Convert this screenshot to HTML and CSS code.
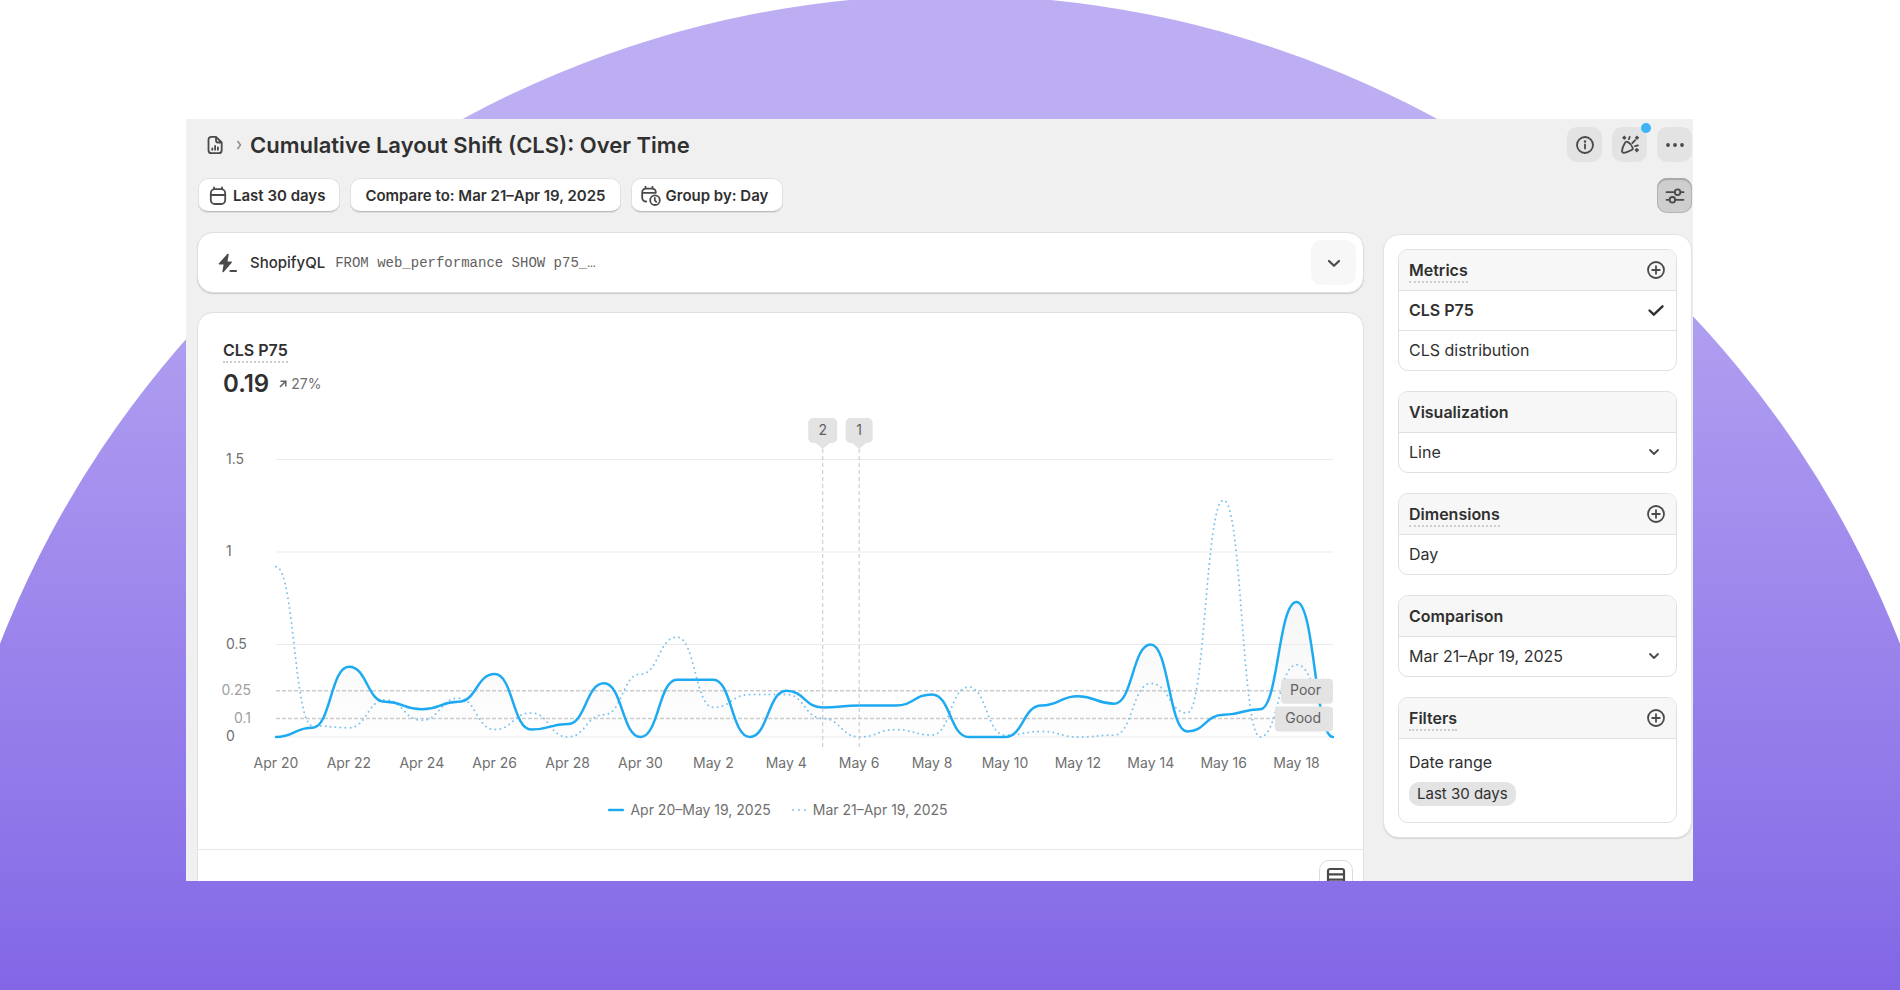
FILE: index.html
```html
<!DOCTYPE html>
<html lang="en">

<head>
  <meta charset="utf-8">
  <title>Cumulative Layout Shift (CLS): Over Time</title>
  <link rel="stylesheet" href="styles.css">
</head>

<body>
  <div class="hero">
    <div class="window">

      <header class="header">
        <svg class="icon" viewBox="0 0 20 20">
          <path d="M11 1.800H6.500A3 3 0 0 0 3.500 4.800v10.400a3 3 0 0 0 3 3h7.200a3 3 0 0 0 3-3V7.500zM11 1.800v3.700a2 2 0 0 0 2 2h3.700M7.300 14.800v-1.500M10.100 14.800v-3.800M12.900 14.800v-2.500" />
        </svg>
        <svg class="crumb" viewBox="0 0 8 12"><path d="M2.500 2l3 4-3 4" /></svg>
        <h1>Cumulative Layout Shift (CLS): Over Time</h1>
        <div class="header-actions">
          <button class="icon-button" aria-label="About this report">
            <svg class="icon" viewBox="0 0 20 20">
              <circle cx="10" cy="10" r="8" />
              <path d="M10 9.500v4" />
              <circle class="dot" cx="10" cy="6.500" r="1.200" />
            </svg>
          </button>
          <button class="icon-button" aria-label="What's new">
            <svg class="icon" viewBox="0 0 20 20">
              <path d="M7.600 6.900c1.800.9 4.200 3.500 5 5.600.5 1.300 0 2-1 2.500-2.200 1.200-4.800 2.500-7.600 2.800-1.300.1-2.200-.9-2-2.200.3-2.700 1.600-5.400 2.900-7.600.6-1 1.500-1.700 2.700-1.100zM8.900 4.200l.8-2.400M12.300 8.200l2.900-3M15 11.200l3-.9" />
              <path class="dot" d="M4.300 .6l2.200 2.200-2.200 2.200-2.200-2.200zM17 .6l2.200 2.200L17 5l-2.200-2.200zM16.800 12.800l2.300 2.300-2.300 2.300-2.300-2.300z" />
            </svg>
            <span class="notice"></span>
          </button>
          <button class="icon-button" aria-label="More actions">
            <svg class="icon" viewBox="0 0 20 20">
              <circle class="dot" cx="3" cy="10" r="1.900" />
              <circle class="dot" cx="10" cy="10" r="1.900" />
              <circle class="dot" cx="17" cy="10" r="1.900" />
            </svg>
          </button>
        </div>
      </header>

      <div class="toolbar">
        <button class="chip">
          <svg class="icon" viewBox="0 0 20 20">
            <rect x="2.800" y="3.200" width="14.400" height="14.800" rx="4" />
            <path d="M6 1.500v1.700M14 1.500v1.700M3 9h14" />
          </svg>
          Last 30 days
        </button>
        <button class="chip chip-plain">Compare to: Mar 21–Apr 19, 2025</button>
        <button class="chip">
          <svg class="icon" viewBox="0 0 20 20">
            <path d="M4.500 .8v1.800M11.500 .8v1.800M5.200 15.500c-2.200 0-4-1.500-4-3.700V6.200a3.600 3.600 0 0 1 3.600-3.600h6.400a3.600 3.600 0 0 1 3.600 3.600v.6H1.200" />
            <circle cx="14" cy="14.200" r="4.800" />
            <path d="M13.800 11.800v2.600l1.500 1.400" />
          </svg>
          Group by: Day
        </button>
        <button class="icon-button pressed" aria-label="Report settings">
          <svg class="icon" viewBox="0 0 20 20">
            <path d="M1.500 6.200h8.300M15.400 6.200h3.100M1.500 13.800h3.100M10.200 13.800h8.300" />
            <circle cx="12.600" cy="6.200" r="2.800" />
            <circle cx="7.400" cy="13.800" r="2.800" />
          </svg>
        </button>
      </div>

      <div class="content">
        <main class="main">
          <section class="card query">
            <svg class="icon" viewBox="0 0 20 20">
              <path class="dot" d="M9.300 1L1 10.300c-.5.600-.2 1.300.6 1.300h4l-1.200 6.600c-.2 1 .7 1.400 1.300.7l8-9.200c.5-.6.2-1.300-.6-1.300H9.500l1.200-6.700c.1-1-.8-1.400-1.400-.7z" />
              <path class="thick" d="M12.500 18h5.500" />
            </svg>
            <span class="query-name">ShopifyQL</span>
            <code>FROM web_performance SHOW p75_…</code>
            <button class="expand" aria-label="Expand query">
              <svg class="icon" viewBox="0 0 20 20"><path class="thick" d="M5 8l5 4.800 5-4.800" /></svg>
            </button>
          </section>

          <section class="card report">
            <div class="report-body">
              <h2><span class="hint">CLS P75</span></h2>
              <div class="total">
                <strong>0.19</strong>
                <svg class="trend" viewBox="0 0 8 8"><path d="M1 7l5.500-5.500M1.500 1.200h5.300V6.500" /></svg>
                <span>27%</span>
              </div>
              <svg id="chart" role="img" aria-label="CLS P75 over time"></svg>
              <div class="legend">
                <span class="legend-item">
                  <svg viewBox="0 0 16 4"><path class="current" d="M1 2h14" /></svg>
                  Apr 20–May 19, 2025
                </span>
                <span class="legend-item">
                  <svg viewBox="0 0 16 4"><path class="previous" d="M2 2h13" /></svg>
                  Mar 21–Apr 19, 2025
                </span>
              </div>
            </div>
            <div class="table-bar">
              <button class="table-toggle" aria-label="Table options">
                <svg class="icon" viewBox="0 0 20 20">
                  <rect class="thick" x="2" y="2" width="16" height="16" rx="2" />
                  <path class="thick" d="M2 7.300h16M2 12.700h16" />
                </svg>
              </button>
            </div>
          </section>
        </main>

        <aside class="panel">
          <section class="box">
            <div class="box-head">
              <h3 class="hint">Metrics</h3>
              <button class="add" aria-label="Add metric">
                <svg class="icon" viewBox="0 0 20 20"><circle cx="10" cy="10" r="8" /><path d="M10 6.200v7.600M6.200 10h7.600" /></svg>
              </button>
            </div>
            <button class="row selected">
              CLS P75
              <svg class="icon" viewBox="0 0 20 20"><path d="M3.500 10.500l4.300 4.200 8.700-8.400" /></svg>
            </button>
            <button class="row">CLS distribution</button>
          </section>

          <section class="box">
            <div class="box-head">
              <h3><label for="visualization">Visualization</label></h3>
            </div>
            <div class="row">
              <select id="visualization">
                <option>Line</option>
              </select>
              <svg class="chevron" viewBox="0 0 12 12"><path d="M2 4l4 4 4-4" /></svg>
            </div>
          </section>

          <section class="box">
            <div class="box-head">
              <h3 class="hint">Dimensions</h3>
              <button class="add" aria-label="Add dimension">
                <svg class="icon" viewBox="0 0 20 20"><circle cx="10" cy="10" r="8" /><path d="M10 6.200v7.600M6.200 10h7.600" /></svg>
              </button>
            </div>
            <button class="row">Day</button>
          </section>

          <section class="box">
            <div class="box-head">
              <h3><label for="comparison">Comparison</label></h3>
            </div>
            <div class="row">
              <select id="comparison">
                <option>Mar 21–Apr 19, 2025</option>
              </select>
              <svg class="chevron" viewBox="0 0 12 12"><path d="M2 4l4 4 4-4" /></svg>
            </div>
          </section>

          <section class="box">
            <div class="box-head">
              <h3 class="hint">Filters</h3>
              <button class="add" aria-label="Add filter">
                <svg class="icon" viewBox="0 0 20 20"><circle cx="10" cy="10" r="8" /><path d="M10 6.200v7.600M6.200 10h7.600" /></svg>
              </button>
            </div>
            <div class="filter">
              <span>Date range</span>
              <span class="badge">Last 30 days</span>
            </div>
          </section>
        </aside>
      </div>

    </div>
  </div>

  <script src="chart.js"></script>
</body>
</html>
```
FILE: styles.css
```css
* {
  box-sizing: border-box;
}

body {
  margin: 0;
  font-family: Inter, "Liberation Sans", sans-serif;
  font-size: 16px;
  line-height: 20px;
  color: #303030;
}

h1, h2, h3 {
  margin: 0;
  font-weight: 600;
}

button, select {
  font: inherit;
  color: inherit;
  border: none;
  background: none;
  padding: 0;
  margin: 0;
  cursor: pointer;
}

.hero {
  position: relative;
  display: flex;
  height: 100vh;
  min-height: 600px;
  padding: 119px 207px 109px 186px;
  overflow: hidden;
  background: #fff;
}

/* purple circle behind the window */
.hero::before {
  content: "";
  position: absolute;
  inset: 0;
  background: linear-gradient(#bdaef3 0, #bdaef3 120px, #8b72e8 870px, #8266e6 100%);
  clip-path: circle(1020px at 50% 1015px);
}

.window {
  position: relative;
  flex: 1;
  min-width: 0;
  overflow: hidden;
  background: #f0f0f0;
}

.icon {
  display: block;
  flex: none;
  width: 20px;
  height: 20px;
  fill: none;
  stroke: #4a4a4a;
  stroke-width: 1.8;
  stroke-linecap: round;
  stroke-linejoin: round;
}

.icon .dot {
  fill: #4a4a4a;
  stroke: none;
}

.icon .thick {
  stroke-width: 2.2;
}

/* header */

.header {
  display: flex;
  align-items: center;
  padding: 8px 1px 0 19px;
}

.crumb {
  width: 8px;
  height: 12px;
  margin: 0 7px 0 10px;
  fill: none;
  stroke: #8a8a8a;
  stroke-width: 1.5;
}

h1 {
  font-size: 22px;
  font-weight: 570;
  line-height: 28px;
}

.header-actions {
  display: flex;
  gap: 10px;
  margin-left: auto;
}

.icon-button {
  position: relative;
  display: flex;
  align-items: center;
  justify-content: center;
  width: 35px;
  height: 35px;
  border-radius: 10px;
  background: #e3e3e4;
}

.icon-button.pressed {
  margin-left: auto;
  background: #cecece;
  box-shadow: inset 0 2px 1px #a8a8a8, inset 0 0 0 1px #b5b5b5;
}

.notice {
  position: absolute;
  top: -4px;
  right: -4px;
  width: 10px;
  height: 10px;
  border-radius: 50%;
  background: #3db4f7;
}

/* toolbar */

.toolbar {
  display: flex;
  gap: 10px;
  padding: 16px 1px 0 12px;
}

.chip {
  display: flex;
  align-items: center;
  gap: 5px;
  height: 35px;
  padding: 0 15px 0 10px;
  border-radius: 10px;
  background: #fff;
  box-shadow: inset 0 0 0 1px #e0e0e0, inset 0 -2px 0 #bcbcbc;
  font-size: 15px;
  font-weight: 570;
}

.chip-plain {
  padding: 0 15px;
}

/* content */

.content {
  display: grid;
  grid-template-columns: 1fr 309px;
  align-items: start;
  gap: 19px;
  padding: 19px 1px 0 11px;
}

.main {
  display: flex;
  flex-direction: column;
  gap: 19px;
  min-width: 0;
}

.card {
  border: 1px solid #e0e0e0;
  border-radius: 16px;
  background: #fff;
}

.query {
  display: flex;
  align-items: center;
  height: 61px;
  padding: 0 7px 0 20px;
  box-shadow: 0 1px 1px #c8c8c8;
}

.query-name {
  margin: 0 10px 0 12px;
  font-size: 15px;
  font-weight: 450;
}

code {
  font-family: "Liberation Mono", monospace;
  font-size: 14px;
  color: #616161;
}

.expand {
  display: flex;
  align-items: center;
  justify-content: center;
  width: 45px;
  height: 45px;
  margin-left: auto;
  border-radius: 10px;
  background: #f7f7f7;
}

.report-body {
  padding: 27px 30px 29px 25px;
}

h2 {
  font-size: 16px;
  line-height: 20px;
}

.hint {
  padding-bottom: 1px;
  border-bottom: 2px dotted #ccc;
}

.total {
  display: flex;
  align-items: center;
  margin-top: 9px;
  font-size: 14px;
  color: #707070;
}

.total strong {
  font-size: 24px;
  font-weight: 600;
  line-height: 30px;
  color: #303030;
}

.trend {
  width: 8px;
  height: 8px;
  margin: 0 4px 0 10px;
  fill: none;
  stroke: #616161;
  stroke-width: 1.5;
}

/* chart */

#chart {
  display: block;
  width: 100%;
  height: 372px;
  overflow: visible;
  font-size: 14px;
  fill: #707070;
}

#chart .grid {
  stroke: #ebebeb;
}

#chart .threshold {
  stroke: #ccc;
  stroke-width: 1.5;
  stroke-dasharray: 4 2;
}

#chart .threshold-label {
  fill: #a0a0a0;
}

#chart .marker {
  stroke: #c4c4c4;
  stroke-dasharray: 4 3;
}

#chart .tag {
  fill: #e3e3e4;
}

#chart .tag-label {
  fill: #616161;
}

#chart .area {
  fill: url(#fade);
}

.current {
  fill: none;
  stroke: #1eaaf1;
  stroke-width: 2.5;
  stroke-linecap: round;
}

.previous {
  fill: none;
  stroke: #7cc3ee;
  stroke-width: 2;
  stroke-linecap: round;
  stroke-dasharray: 0 5;
}

.legend {
  display: flex;
  justify-content: center;
  gap: 20px;
  margin-top: 29px;
  font-size: 14px;
  color: #707070;
}

.legend-item {
  display: flex;
  align-items: center;
  gap: 6px;
}

.legend-item svg {
  width: 16px;
  height: 4px;
}

.legend-item .previous {
  stroke-dasharray: 0 6;
}

.table-bar {
  display: flex;
  justify-content: flex-end;
  padding: 10px 10px 40px;
  border-top: 1px solid #e8e8e8;
}

.table-toggle {
  display: flex;
  align-items: center;
  justify-content: center;
  width: 34px;
  height: 34px;
  border: 1px solid #dcdcdc;
  border-radius: 10px;
}

/* side panel */

.panel {
  display: flex;
  flex-direction: column;
  gap: 20px;
  margin-top: 2px;
  padding: 14px;
  border: 1px solid #e3e3e3;
  border-radius: 16px;
  background: #fff;
  box-shadow: 0 1px 1px #d4d4d4;
}

.box {
  border: 1px solid #e0e0e0;
  border-radius: 10px;
  overflow: hidden;
}

.box-head {
  display: flex;
  align-items: center;
  justify-content: space-between;
  height: 40px;
  padding: 0 10px;
  background: #f7f7f7;
}

h3 {
  font-size: 16px;
  line-height: 20px;
}

h3.hint {
  margin-bottom: -2px;
}

.row {
  display: flex;
  align-items: center;
  justify-content: space-between;
  width: 100%;
  height: 40px;
  padding: 0 10px 1px;
  border-top: 1px solid #e0e0e0;
  text-align: left;
}

.selected {
  font-weight: 570;
}

.selected .icon {
  stroke: #303030;
  stroke-width: 2.4;
}

.row select {
  flex: 1;
  appearance: none;
}

.chevron {
  width: 12px;
  height: 12px;
  margin-right: 6px;
  fill: none;
  stroke: #4a4a4a;
  stroke-width: 1.8;
  stroke-linecap: round;
  stroke-linejoin: round;
}

.filter {
  display: flex;
  flex-direction: column;
  align-items: flex-start;
  gap: 10px;
  padding: 13px 10px 16px;
  border-top: 1px solid #e0e0e0;
}

.badge {
  padding: 2px 8px;
  border-radius: 10px;
  background: #e3e3e4;
  font-size: 15px;
}
```
FILE: chart.js
```js
const current = [0, 0.05, 0.38, 0.19, 0.15, 0.19, 0.34, 0.04, 0.07, 0.29,
  0, 0.31, 0.31, 0, 0.25, 0.16, 0.17, 0.17, 0.23, 0,
  0, 0.17, 0.22, 0.18, 0.5, 0.03, 0.12, 0.15, 0.73, 0];

const previous = [0.92, 0.06, 0.05, 0.2, 0.09, 0.21, 0.04, 0.13, 0, 0.12,
  0.34, 0.54, 0.16, 0.23, 0.23, 0.1, 0, 0.04, 0.01, 0.27,
  0.01, 0.03, 0, 0.01, 0.29, 0.13, 1.28, 0, 0.39, 0.1];

const thresholds = [
  { value: 0.25, name: 'Poor', width: 52 },
  { value: 0.1, name: 'Good', width: 58 },
];

const markers = [
  { day: 15, count: 2, width: 29 },
  { day: 16, count: 1, width: 27 },
];

const left = 53;
const bottom = 338;
const unit = 185;  // pixels per 1.0 of CLS

const chart = document.getElementById('chart');

function dayName(i) {
  return i < 11 ? 'Apr ' + (20 + i) : 'May ' + (i - 10);
}

function draw() {
  const right = chart.clientWidth;
  const step = (right - left) / (current.length - 1);
  const x = i => left + i * step;
  const y = value => bottom - value * unit;

  // smooth line, flat at every point
  function line(values) {
    let d = `M${x(0)} ${y(values[0])}`;
    for (let i = 1; i < values.length; i++) {
      const mid = x(i - 0.5);
      d += `C${mid} ${y(values[i - 1])} ${mid} ${y(values[i])} ${x(i)} ${y(values[i])}`;
    }
    return d;
  }

  let out = `<defs><linearGradient id="fade" x2="0" y2="1">
    <stop offset="0" stop-color="#f6f6f6" /><stop offset="1" stop-color="#fefefe" />
  </linearGradient></defs>`;

  out += `<path class="area" d="${line(current)}V${bottom}H${left}Z" />`;

  for (const value of [0, 0.5, 1, 1.5]) {
    out += `<line class="grid" x1="${left}" x2="${right}" y1="${y(value)}" y2="${y(value)}" />`;
    out += `<text x="3" y="${y(value) + 4}">${value}</text>`;
  }

  for (const t of thresholds) {
    out += `<line class="threshold" x1="${left}" x2="${right}" y1="${y(t.value)}" y2="${y(t.value)}" />`;
    out += `<text class="threshold-label" x="28" y="${y(t.value) + 4}" text-anchor="end">${t.value}</text>`;
  }

  for (let i = 0; i < current.length; i += 2) {
    out += `<text x="${x(i)}" y="${bottom + 31}" text-anchor="middle">${dayName(i)}</text>`;
  }

  out += `<path class="previous" d="${line(previous)}" />`;
  out += `<path class="current" d="${line(current)}" />`;

  for (const m of markers) {
    const cx = x(m.day);
    out += `<line class="marker" x1="${cx}" x2="${cx}" y1="50" y2="351" />`;
    out += `<rect class="tag" x="${cx - m.width / 2}" y="19" width="${m.width}" height="25" rx="5" />`;
    out += `<path class="tag" d="M${cx - 7} 44h14l-7 6z" />`;
    out += `<text class="tag-label" x="${cx}" y="36" text-anchor="middle">${m.count}</text>`;
  }

  for (const t of thresholds) {
    out += `<rect class="tag" x="${right - t.width}" y="${y(t.value) - 12}" width="${t.width}" height="25" rx="4" />`;
    out += `<text class="tag-label" x="${right - 12}" y="${y(t.value) + 4}" text-anchor="end">${t.name}</text>`;
  }

  chart.innerHTML = out;
}

draw();
window.addEventListener('resize', draw);
```
